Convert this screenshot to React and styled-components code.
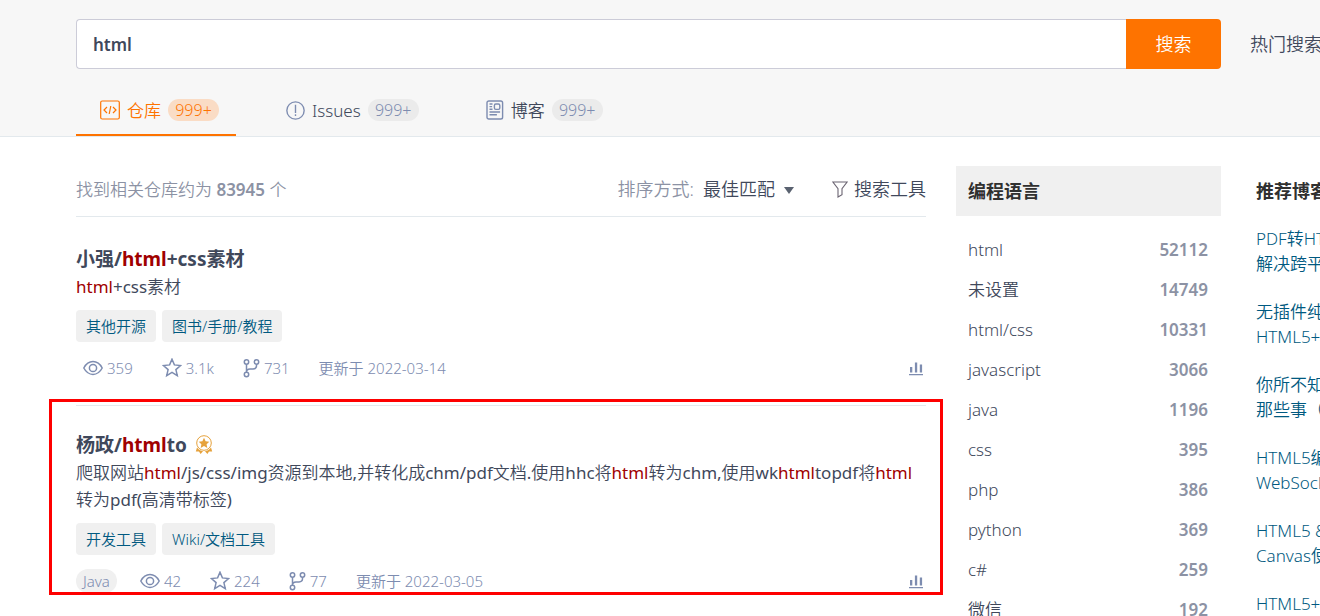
import { useState } from "react";
import styled, { createGlobalStyle } from "styled-components";

const languages = [
  ["html", 52112],
  ["未设置", 14749],
  ["html/css", 10331],
  ["javascript", 3066],
  ["java", 1196],
  ["css", 395],
  ["php", 386],
  ["python", 369],
  ["c#", 259],
  ["微信", 192],
];

const blogs = [
  ["PDF转HTML5", "解决跨平台"],
  ["无插件纯Web", "HTML5+CSS3"],
  ["你所不知道的", "那些事（一）"],
  ["HTML5编程之", "WebSocket"],
  ["HTML5 & CSS3", "Canvas使用"],
  ["HTML5+CSS3", "移动开发"],
];

const tabs = [
  { key: "repo", label: "仓库", Icon: CodeIcon },
  { key: "issue", label: "Issues", Icon: IssueIcon },
  { key: "blog", label: "博客", Icon: BlogIcon },
];

const repos = [
  {
    title: "小强/html+css素材",
    desc: "html+css素材",
    tags: ["其他开源", "图书/手册/教程"],
    views: "359",
    stars: "3.1k",
    forks: "731",
    date: "2022-03-14",
  },
  {
    title: "杨政/htmlto",
    desc: "爬取网站html/js/css/img资源到本地,并转化成chm/pdf文档.使用hhc将html转为chm,使用wkhtmltopdf将html转为pdf(高清带标签)",
    tags: ["开发工具", "Wiki/文档工具"],
    lang: "Java",
    views: "42",
    stars: "224",
    forks: "77",
    date: "2022-03-05",
    recommended: true,
    marked: true,
  },
];

// wraps every match of the keyword in <em>
function highlight(text, word = "html") {
  return text
    .split(new RegExp(`(${word})`))
    .map((part, i) => (part === word ? <Hit key={i}>{part}</Hit> : part));
}

export default function App() {
  const [keyword, setKeyword] = useState("html");
  const [active, setActive] = useState("repo");

  return (
    <>
      <GlobalStyle />
      <Header>
        <SearchRow onSubmit={(e) => e.preventDefault()}>
          <SearchInput
            type="text"
            aria-label="搜索"
            value={keyword}
            onChange={(e) => setKeyword(e.target.value)}
          />
          <SearchButton type="submit">搜索</SearchButton>
          <HotSearch>热门搜索：</HotSearch>
        </SearchRow>
        <Tabs>
          {tabs.map(({ key, label, Icon }) => (
            <Tab key={key} type="button" $active={active === key} onClick={() => setActive(key)}>
              <Icon />
              {label}
              <Count $active={active === key}>999+</Count>
            </Tab>
          ))}
        </Tabs>
      </Header>

      <Content>
        <main>
          <Toolbar>
            <Total>
              找到相关仓库约为 <strong>83945</strong> 个
            </Total>
            <SortLabel htmlFor="sort">排序方式:</SortLabel>
            <SortBox>
              <SortSelect id="sort" defaultValue="best">
                <option value="best">最佳匹配</option>
              </SortSelect>
              <CaretIcon />
            </SortBox>
            <ToolButton type="button">
              <FilterIcon />
              搜索工具
            </ToolButton>
          </Toolbar>
          <RepoList>
            {repos.map((repo) => (
              <Repo key={repo.title}>
                {repo.marked && <Marker />}
                <RepoTitle>
                  <a href="#repo">{highlight(repo.title)}</a>
                  {repo.recommended && <MedalIcon />}
                </RepoTitle>
                <Desc>{highlight(repo.desc)}</Desc>
                <TagRow>
                  {repo.tags.map((tag) => (
                    <Tag key={tag} href="#tag">
                      {tag}
                    </Tag>
                  ))}
                </TagRow>
                <Stats>
                  {repo.lang && <Lang>{repo.lang}</Lang>}
                  <Stat>
                    <EyeIcon />
                    {repo.views}
                  </Stat>
                  <Stat>
                    <StarIcon />
                    {repo.stars}
                  </Stat>
                  <Stat>
                    <ForkIcon />
                    {repo.forks}
                  </Stat>
                  <span>更新于 {repo.date}</span>
                  <ChartIcon />
                </Stats>
              </Repo>
            ))}
          </RepoList>
        </main>

        <aside>
          <SideTitle>编程语言</SideTitle>
          <LangList>
            {languages.map(([name, count]) => (
              <LangRow key={name}>
                <a href="#lang">{name}</a>
                <b>{count}</b>
              </LangRow>
            ))}
          </LangList>
        </aside>

        <BlogPanel>
          <BlogTitle>推荐博客</BlogTitle>
          {blogs.map(([first, second]) => (
            <BlogLink key={first} href="#blog">
              {first}
              <br />
              {second}
            </BlogLink>
          ))}
        </BlogPanel>
      </Content>
    </>
  );
}

/* Icons */
function CodeIcon() {
  return (
    <svg width="20" height="20" viewBox="0 0 20 20" fill="none" stroke="#fe7300" strokeWidth="1.2">
      <rect x="0.7" y="1" width="18.6" height="18" rx="1.5" />
      <path d="M7 7 4 10l3 3M13 7l3 3-3 3M10.8 6 9.2 14" />
    </svg>
  );
}

function IssueIcon() {
  return (
    <svg width="19" height="19" viewBox="0 0 18 18" fill="none" stroke="#7d8cb0" strokeWidth="1.3">
      <circle cx="9" cy="9" r="8.2" />
      <path d="M9 3.5v7.8M9 12.6v1.7" />
    </svg>
  );
}

function BlogIcon() {
  return (
    <svg width="18" height="20" viewBox="0 0 18 20" fill="none" stroke="#7d8cb0" strokeWidth="1.4">
      <rect x="1" y="1" width="15.6" height="18" rx="1.8" />
      <rect x="8.4" y="4" width="5.4" height="5.4" rx="1.4" />
      <path d="M3.5 4h3M3.5 6.6h2.6M3.5 9.2h3M3.5 12h10.6M3.5 14.8h7.4" />
    </svg>
  );
}

function CaretIcon() {
  return (
    <svg width="10" height="7" viewBox="0 0 10 7" fill="#5a6270">
      <path d="M0 0h10L5 7z" />
    </svg>
  );
}

function FilterIcon() {
  return (
    <svg width="16" height="17" viewBox="0 0 16 17" fill="none" stroke="#6b6472" strokeWidth="1.1">
      <path d="M.9 1h14.2L10 7.6v6L6 16V7.6z" />
    </svg>
  );
}

function MedalIcon() {
  return (
    <svg width="18" height="20" viewBox="0 0 18 20" fill="#e6a23c">
      <circle cx="9" cy="8" r="7.3" fill="none" stroke="#e6a23c" strokeWidth="1" />
      <path d="m9 2.8 1.6 3.4 3.7.5-2.7 2.5.7 3.7L9 11.1l-3.3 1.8.7-3.7-2.7-2.5 3.7-.5z" />
      <path d="M2 12.6.8 16.4l3.2.1 1.6 2.5L8 16.2h2l2.4 2.8 1.6-2.5 3.2-.1-1.2-3.8a8.4 8.4 0 0 1-14 0z" />
    </svg>
  );
}

function EyeIcon() {
  return (
    <svg width="20" height="16" viewBox="0 0 20 16" fill="none" stroke="#7d8cb0" strokeWidth="1.5">
      <path d="M.8 8C3 3.9 6.2 1.6 10 1.6S17 3.9 19.2 8C17 12.1 13.8 14.4 10 14.4S3 12.1.8 8z" />
      <circle cx="10" cy="8" r="3.6" />
    </svg>
  );
}

function StarIcon() {
  return (
    <svg width="20" height="20" viewBox="0 0 20 20" fill="none" stroke="#7d8cb0" strokeWidth="1.5">
      <path d="m10 1.2 2.4 5.7 6.2.6-4.7 4.1 1.4 6L10 14.4l-5.3 3.2 1.4-6-4.7-4.1 6.2-.6z" />
    </svg>
  );
}

function ForkIcon() {
  return (
    <svg width="17" height="20" viewBox="0 0 17 20" fill="none" stroke="#7d8cb0" strokeWidth="1.5">
      <circle cx="3.5" cy="4" r="2.2" />
      <circle cx="13.5" cy="4" r="2.2" />
      <circle cx="3.5" cy="16.5" r="2.2" />
      <path d="M3.5 6.2v8M13.5 6.2v1.6q0 3-3.5 3.2H7q-3.5.2-3.5 3" />
    </svg>
  );
}

function ChartIcon() {
  return (
    <svg width="14" height="16" viewBox="0 0 14 16" fill="#7d8cb0">
      <path d="M1 7h2.3v5.5H1zM5.9 2.5h2.3v10H5.9zM10.8 4.5h2.3v8h-2.3zM0 14h14v1.2H0z" />
    </svg>
  );
}

/* Styles */
const GlobalStyle = createGlobalStyle`
  * {
    box-sizing: border-box;
  }

  body {
    margin: 0;
    height: 100vh;
    overflow: hidden;
    background: #fff;
    color: #40485b;
    font: 350 17px/27px "Noto Sans", "Noto Sans CJK SC", sans-serif;
  }

  a {
    color: inherit;
    text-decoration: none;
  }

  button, input, select {
    font: inherit;
    color: inherit;
  }

  svg {
    flex: none;
  }
`;

const Header = styled.header`
  padding: 19px 0 0 76px;
  background: #f7f7f7;
  border-bottom: 1px solid #e3e9ed;
`;

const SearchRow = styled.form`
  display: flex;
  height: 50px;
`;

const SearchInput = styled.input`
  flex: 1;
  min-width: 0;
  padding: 0 16px;
  border: 1px solid #ccccd8;
  border-right: 0;
  border-radius: 4px 0 0 4px;
  background: #fff;
  font-weight: 600;
  outline: none;
`;

const SearchButton = styled.button`
  width: 95px;
  border: 0;
  border-radius: 0 4px 4px 0;
  background: #fe7300;
  color: #fff;
  font-size: 18px;
  cursor: pointer;
`;

const HotSearch = styled.span`
  width: 70px;
  margin-left: 29px;
  overflow: hidden;
  white-space: nowrap;
  font-size: 18px;
  line-height: 50px;
`;

const Tabs = styled.nav`
  display: flex;
  gap: 26px;
  margin-top: 17px;
`;

const Tab = styled.button`
  display: flex;
  align-items: center;
  gap: 7px;
  height: 50px;
  padding: 0 17px 0 24px;
  border: 0;
  border-bottom: 2px solid ${({ $active }) => ($active ? "#fe7300" : "transparent")};
  background: none;
  color: ${({ $active }) => ($active ? "#fe7300" : "#40485b")};
  cursor: pointer;
`;

const Count = styled.span`
  min-width: 51px;
  border-radius: 11px;
  background: ${({ $active }) => ($active ? "#fadcc5" : "#ebebeb")};
  color: ${({ $active }) => ($active ? "#fe7300" : "#7d8cb0")};
  font-size: 16px;
  line-height: 22px;
  text-align: center;
`;

const Content = styled.div`
  display: grid;
  grid-template-columns: minmax(0, 1fr) 265px 69px;
  gap: 30px;
  padding: 29px 0 0 76px;
`;

const Toolbar = styled.div`
  display: flex;
  align-items: center;
  height: 51px;
  padding-bottom: 4px;
  border-bottom: 1px solid #e3e9ed;
  font-size: 18px;
`;

const Total = styled.div`
  flex: 1;
  color: #8c92a4;
  font-size: 17px;

  strong {
    font-weight: 600;
  }
`;

const SortLabel = styled.label`
  color: #8c92a4;
`;

const SortBox = styled.div`
  position: relative;
  margin: 0 38px 0 9px;

  svg {
    position: absolute;
    top: 11px;
    right: 0;
    pointer-events: none;
  }
`;

const SortSelect = styled.select`
  display: block;
  padding: 0 19px 0 0;
  border: 0;
  background: none;
  appearance: none;
`;

const ToolButton = styled.button`
  display: flex;
  align-items: center;
  gap: 6px;
  padding: 0;
  border: 0;
  background: none;
  cursor: pointer;
`;

const RepoList = styled.div`
  padding-top: 3px;
`;

const Repo = styled.article`
  position: relative;
  padding: 25px 0;
  border-bottom: 1px solid #e3e9ed;
`;

/* red frame drawn over the marked result */
const Marker = styled.div`
  position: absolute;
  inset: -7px -17px 23px -27px;
  border: 3px solid #fe0000;
  pointer-events: none;
`;

const RepoTitle = styled.h3`
  display: flex;
  align-items: center;
  gap: 8px;
  margin: 0;
  font-size: 19px;
  font-weight: 700;
  line-height: 28px;
`;

const Hit = styled.em`
  color: #a00000;
  font-style: normal;
`;

const Desc = styled.p`
  margin: 0;
  font-family: "Noto Sans", "Noto Sans CJK SC DemiLight", "Noto Sans CJK SC", sans-serif;
  font-weight: 400;
  overflow-wrap: anywhere;
`;

const TagRow = styled.div`
  display: flex;
  gap: 6px;
  margin-top: 10px;
`;

const Tag = styled.a`
  padding: 0 10px;
  border-radius: 4px;
  background: #f0f0f0;
  color: #005980;
  font-size: 15px;
  line-height: 32px;
`;

const Stats = styled.div`
  display: flex;
  align-items: center;
  gap: 29px;
  height: 24px;
  margin-top: 14px;
  color: #7d8cb0;
  font-size: 15px;
  line-height: 24px;

  > svg {
    margin: 0 3px 0 auto;
  }
`;

const Lang = styled.span`
  margin-right: -6px;
  padding: 0 7px;
  border-radius: 12px;
  background: #f0f0f0;
`;

const Stat = styled.span`
  display: flex;
  align-items: center;
  gap: 4px;

  &:first-child {
    margin-left: 7px;
  }
`;

const SideTitle = styled.h4`
  margin: 0;
  padding: 0 12px;
  background: #f0f0f0;
  color: #303030;
  font-size: 18px;
  line-height: 50px;
`;

const LangList = styled.ul`
  margin: 14px 0 0;
  padding: 0 13px 0 12px;
  list-style: none;
`;

const LangRow = styled.li`
  display: flex;
  justify-content: space-between;
  line-height: 40px;

  b {
    color: #8c92a4;
    font-weight: 600;
  }
`;

const BlogPanel = styled.aside`
  padding-left: 5px;
  overflow: hidden;
  white-space: nowrap;
`;

const BlogTitle = styled.h4`
  margin: 0 0 10px;
  color: #303030;
  font-size: 18px;
  line-height: 50px;
`;

const BlogLink = styled.a`
  display: block;
  margin-bottom: 23px;
  color: #005980;
  line-height: 25px;
`;
